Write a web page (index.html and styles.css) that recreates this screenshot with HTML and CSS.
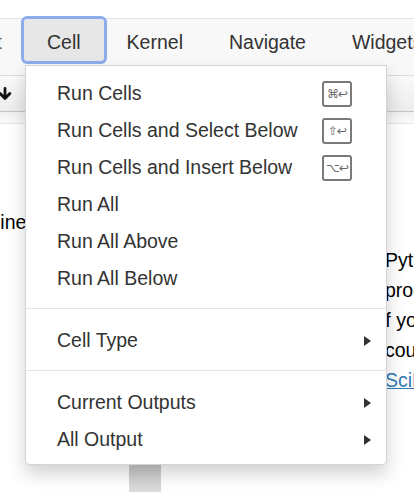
FILE: index.html
```html
<!DOCTYPE html>
<html>
<head>
<meta charset="utf-8">
<link rel="stylesheet" href="styles.css">
</head>
<body>
<div class="page">
  <div class="menubar">
    <span class="cut">Insert</span>
    <div class="mitem active">Cell</div>
    <div class="mitem">Kernel</div>
    <div class="mitem">Navigate</div>
    <div class="mitem">Widgets</div>
  </div>
  <div class="toolbar">
    <svg class="down" width="14" height="14" viewBox="0 0 14 14"><path d="M7 1.5 V10.5 M2.2 6.6 L7 11.4 L11.8 6.6" fill="none" stroke="#111" stroke-width="2.8" stroke-linecap="round" stroke-linejoin="round"/></svg>
  </div>
  <div class="sep"></div>
  <div class="content">
    <div class="leftcol">
      <p class="ln cutleft">Online</p>
      <div class="bar"></div>
    </div>
    <div class="rightcol">
      <p class="ln">Python</p>
      <p class="ln">programming</p>
      <p class="ln shift">if you</p>
      <p class="ln">could</p>
      <p class="ln"><a class="link">SciPy</a></p>
    </div>
  </div>

  <ul class="dropdown">
    <li class="row"><span>Run Cells</span><span class="kbd">⌘↩</span></li>
    <li class="row"><span>Run Cells and Select Below</span><span class="kbd">⇧↩</span></li>
    <li class="row"><span>Run Cells and Insert Below</span><span class="kbd">⌥↩</span></li>
    <li class="row"><span>Run All</span></li>
    <li class="row"><span>Run All Above</span></li>
    <li class="row"><span>Run All Below</span></li>
    <li class="divider"></li>
    <li class="row"><span>Cell Type</span><span class="caret"></span></li>
    <li class="divider"></li>
    <li class="row"><span>Current Outputs</span><span class="caret"></span></li>
    <li class="row"><span>All Output</span><span class="caret"></span></li>
  </ul>
</div>
</body>
</html>
```

FILE: styles.css
```css
* { box-sizing: border-box; }
html, body {
  margin: 0;
  padding: 0;
  background: #fff;
  font-family: "Liberation Sans", Arial, sans-serif;
  font-size: 19.5px;
  color: #333;
}
.page {
  position: relative;
  width: 414px;
  height: 492px;
  overflow: hidden;
}
.menubar {
  margin-top: 18px;
  height: 58px;
  border-top: 1px solid #e3e3e3;
  border-bottom: 1px solid #dcdcdc;
  background: #f8f8f8;
  display: flex;
  align-items: flex-start;
  white-space: nowrap;
}
.cut {
  flex: none;
  width: 24px;
  height: 42px;
  padding: 12px 22px 0 0;
  display: flex;
  justify-content: flex-end;
  color: #666;
}
.mitem {
  height: 42px;
  padding: 12px 23px 0;
  color: #333;
  flex: none;
}
.mitem.active {
  background: #e7e7e7;
  border-radius: 3px;
  box-shadow: 0 0 0 3px #8cadea;
}
.toolbar {
  height: 36px;
  background: linear-gradient(#fafafa, #ececec);
  border-bottom: 1px solid #c4c4c4;
  position: relative;
}
.down {
  display: block;
  margin-left: -2px;
  padding-top: 11px;
  width: 14px;
  height: 25px;
}
.sep {
  height: 12px;
  background: linear-gradient(#f0f0f0, #fafafa);
  border-bottom: 1px solid #e6e6e6;
}
.content {
  display: grid;
  grid-template-columns: 385px 1fr;
  color: #000;
}
.ln {
  margin: 0;
  line-height: 30px;
  white-space: nowrap;
}
.leftcol { padding-top: 83px; }
.cutleft { margin-left: -30px; }
.bar {
  margin-top: 228px;
  margin-left: 129px;
  width: 32px;
  height: 30px;
  background: linear-gradient(#c9c9c9, #dedede);
}
.rightcol { padding-top: 121px; }
.shift { margin-left: -4px; }
.link {
  color: #337ab7;
  text-decoration: underline;
}
.dropdown {
  position: absolute;
  left: 25px;
  top: 65px;
  width: 362px;
  height: 400px;
  margin: 0;
  padding: 9px 0 6px;
  list-style: none;
  background: #fff;
  border: 1px solid rgba(0, 0, 0, 0.17);
  border-radius: 0 0 5px 5px;
  box-shadow: 0 9px 18px rgba(0, 0, 0, 0.18);
}
.row {
  height: 37px;
  line-height: 37px;
  padding: 0 15px 0 31px;
  display: flex;
  align-items: center;
  justify-content: space-between;
  color: #333;
  white-space: nowrap;
}
.kbd {
  width: 30px;
  height: 26px;
  margin-right: 19px;
  border: 2px solid #7a7a7a;
  border-radius: 3px;
  font-family: "DejaVu Sans", sans-serif;
  font-size: 12px;
  line-height: 22px;
  text-align: center;
  color: #666;
  letter-spacing: -1px;
}
.caret {
  width: 0;
  height: 0;
  border-left: 7px solid #333;
  border-top: 5px solid transparent;
  border-bottom: 5px solid transparent;
}
.divider {
  height: 1px;
  margin: 11px 0 13px;
  background: #e5e5e5;
}
```
